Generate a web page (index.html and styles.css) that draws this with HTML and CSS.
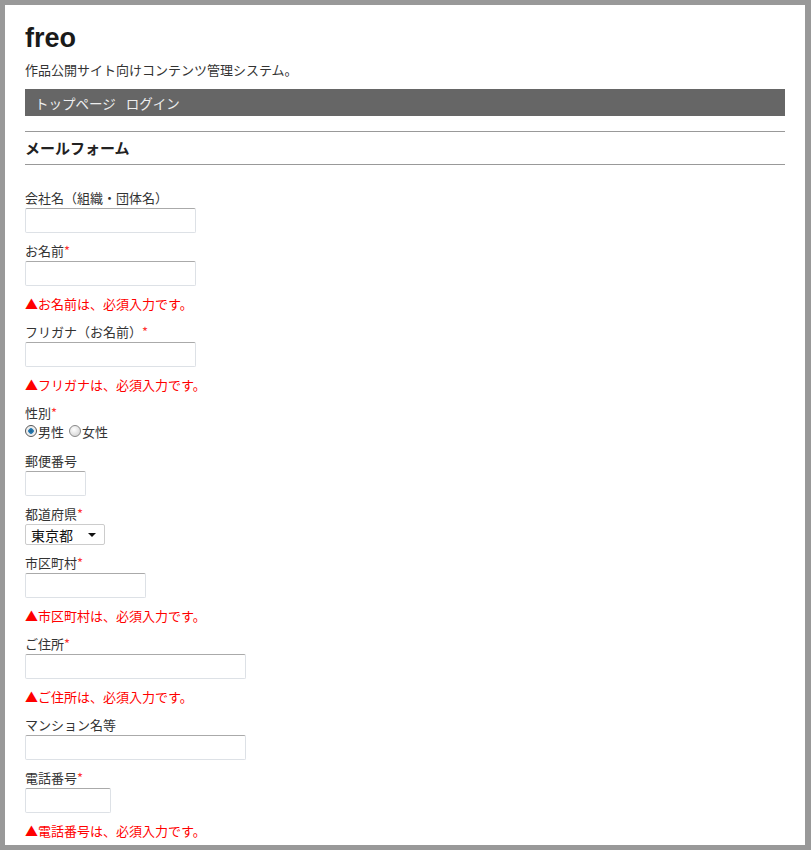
FILE: index.html
```html
<!DOCTYPE html>
<html lang="ja">
<head>
  <meta charset="UTF-8">
  <title>メールフォーム - freo</title>
  <link rel="stylesheet" href="styles.css">
</head>
<body>
  <div class="page">
    <div class="header">
      <h1>freo</h1>
      <p class="tagline">作品公開サイト向けコンテンツ管理システム。</p>
    </div>
    <ul class="menu">
      <li><a href="#">トップページ</a></li>
      <li><a href="#">ログイン</a></li>
    </ul>

    <h2>メールフォーム</h2>

    <form class="form">
      <dl>
        <dt>会社名（組織・団体名）</dt>
        <dd><input type="text" class="w170"></dd>

        <dt>お名前<span class="req">*</span></dt>
        <dd><input type="text" class="w170"></dd>
        <dd class="error">▲お名前は、必須入力です。</dd>

        <dt>フリガナ（お名前）<span class="req">*</span></dt>
        <dd><input type="text" class="w170"></dd>
        <dd class="error">▲フリガナは、必須入力です。</dd>

        <dt>性別<span class="req">*</span></dt>
        <dd class="radios">
          <label><input type="radio" name="sex" checked>男性</label>
          <label><input type="radio" name="sex">女性</label>
        </dd>

        <dt>郵便番号</dt>
        <dd><input type="text" class="w60"></dd>

        <dt>都道府県<span class="req">*</span></dt>
        <dd>
          <span class="select">
            <select>
              <option>東京都</option>
            </select>
          </span>
        </dd>

        <dt>市区町村<span class="req">*</span></dt>
        <dd><input type="text" class="w120"></dd>
        <dd class="error">▲市区町村は、必須入力です。</dd>

        <dt>ご住所<span class="req">*</span></dt>
        <dd><input type="text" class="w220"></dd>
        <dd class="error">▲ご住所は、必須入力です。</dd>

        <dt>マンション名等</dt>
        <dd><input type="text" class="w220"></dd>

        <dt>電話番号<span class="req">*</span></dt>
        <dd><input type="text" class="w85"></dd>
        <dd class="error">▲電話番号は、必須入力です。</dd>
      </dl>
    </form>
  </div>
</body>
</html>
```

FILE: styles.css
```css
html {
  height: 100%;
}
body {
  margin: 0;
  height: 100%;
  padding: 5px 6px 5px 5px;
  box-sizing: border-box;
  background-color: #999;
  font-family: "Noto Sans CJK JP", "Noto Sans", sans-serif;
  font-size: 13px;
  color: #333;
}
.page {
  height: 100%;
  box-sizing: border-box;
  overflow: hidden;
  padding: 18px 20px 0 20px;
  background-color: #fff;
}
.header h1 {
  margin: 0;
  font-family: "Liberation Sans", Arial, sans-serif;
  font-size: 27px;
  line-height: 31px;
  color: #1a1a1a;
}
.tagline {
  margin: 6px 0 0;
  line-height: 20px;
}
.menu {
  list-style: none;
  margin: 9px 0 0;
  padding: 0 0 0 10px;
  height: 27px;
  display: flex;
  align-items: center;
  gap: 10px;
  background-color: #666;
}
.menu a {
  color: #eee;
  font-size: 13.5px;
  text-decoration: none;
}
h2 {
  margin: 15px 0 0;
  height: 32px;
  line-height: 31px;
  font-size: 15px;
  color: #222;
  border-top: 1px solid #999;
  border-bottom: 1px solid #999;
}
.form dl {
  margin: 23px 0 0;
}
.form dt {
  margin-top: 8px;
  line-height: 20px;
}
.form dd {
  margin: 0;
}
.form dd.error {
  margin-top: 8px;
  line-height: 20px;
  color: #f00;
}
.req {
  color: #f33;
}
input[type="text"] {
  display: block;
  box-sizing: border-box;
  height: 25px;
  margin: 0;
  padding: 2px 4px;
  border: 1px solid #dde1e6;
  border-top-color: #aaa;
  border-radius: 2px;
  font: inherit;
}
.w170 { width: 171px; }
.w60 { width: 61px; }
.w120 { width: 121px; }
.w220 { width: 221px; }
.w85 { width: 86px; }

.radios {
  display: flex;
  box-sizing: border-box;
  height: 20px;
  padding-bottom: 4px;
  align-items: center;
  gap: 5px;
}
.radios label {
  display: flex;
  align-items: center;
}
.radios input {
  appearance: none;
  width: 12px;
  height: 12px;
  margin: 0 1px 0 0;
  border: 1px solid #888;
  border-radius: 50%;
  background: radial-gradient(circle at 40% 35%, #fff, #ccc);
  box-sizing: border-box;
}
.radios input:checked {
  background: radial-gradient(circle, #1e5f8c 0, #2a7fb8 2.5px, #e8e8e8 3px, #fff);
  border-color: #555;
}
.select {
  position: relative;
  display: block;
  width: 80px;
}
.select select {
  display: block;
  appearance: none;
  box-sizing: border-box;
  width: 80px;
  height: 21px;
  margin: 0;
  padding: 0 0 0 5px;
  border: 1px solid #ccc;
  border-radius: 2px;
  background-color: #fff;
  font-family: "Noto Sans CJK JP", sans-serif;
  font-size: 14px;
  color: #111;
}
.select::after {
  content: "";
  position: absolute;
  right: 9px;
  top: 9px;
  border-left: 4px solid transparent;
  border-right: 4px solid transparent;
  border-top: 4px solid #111;
  pointer-events: none;
}
```
